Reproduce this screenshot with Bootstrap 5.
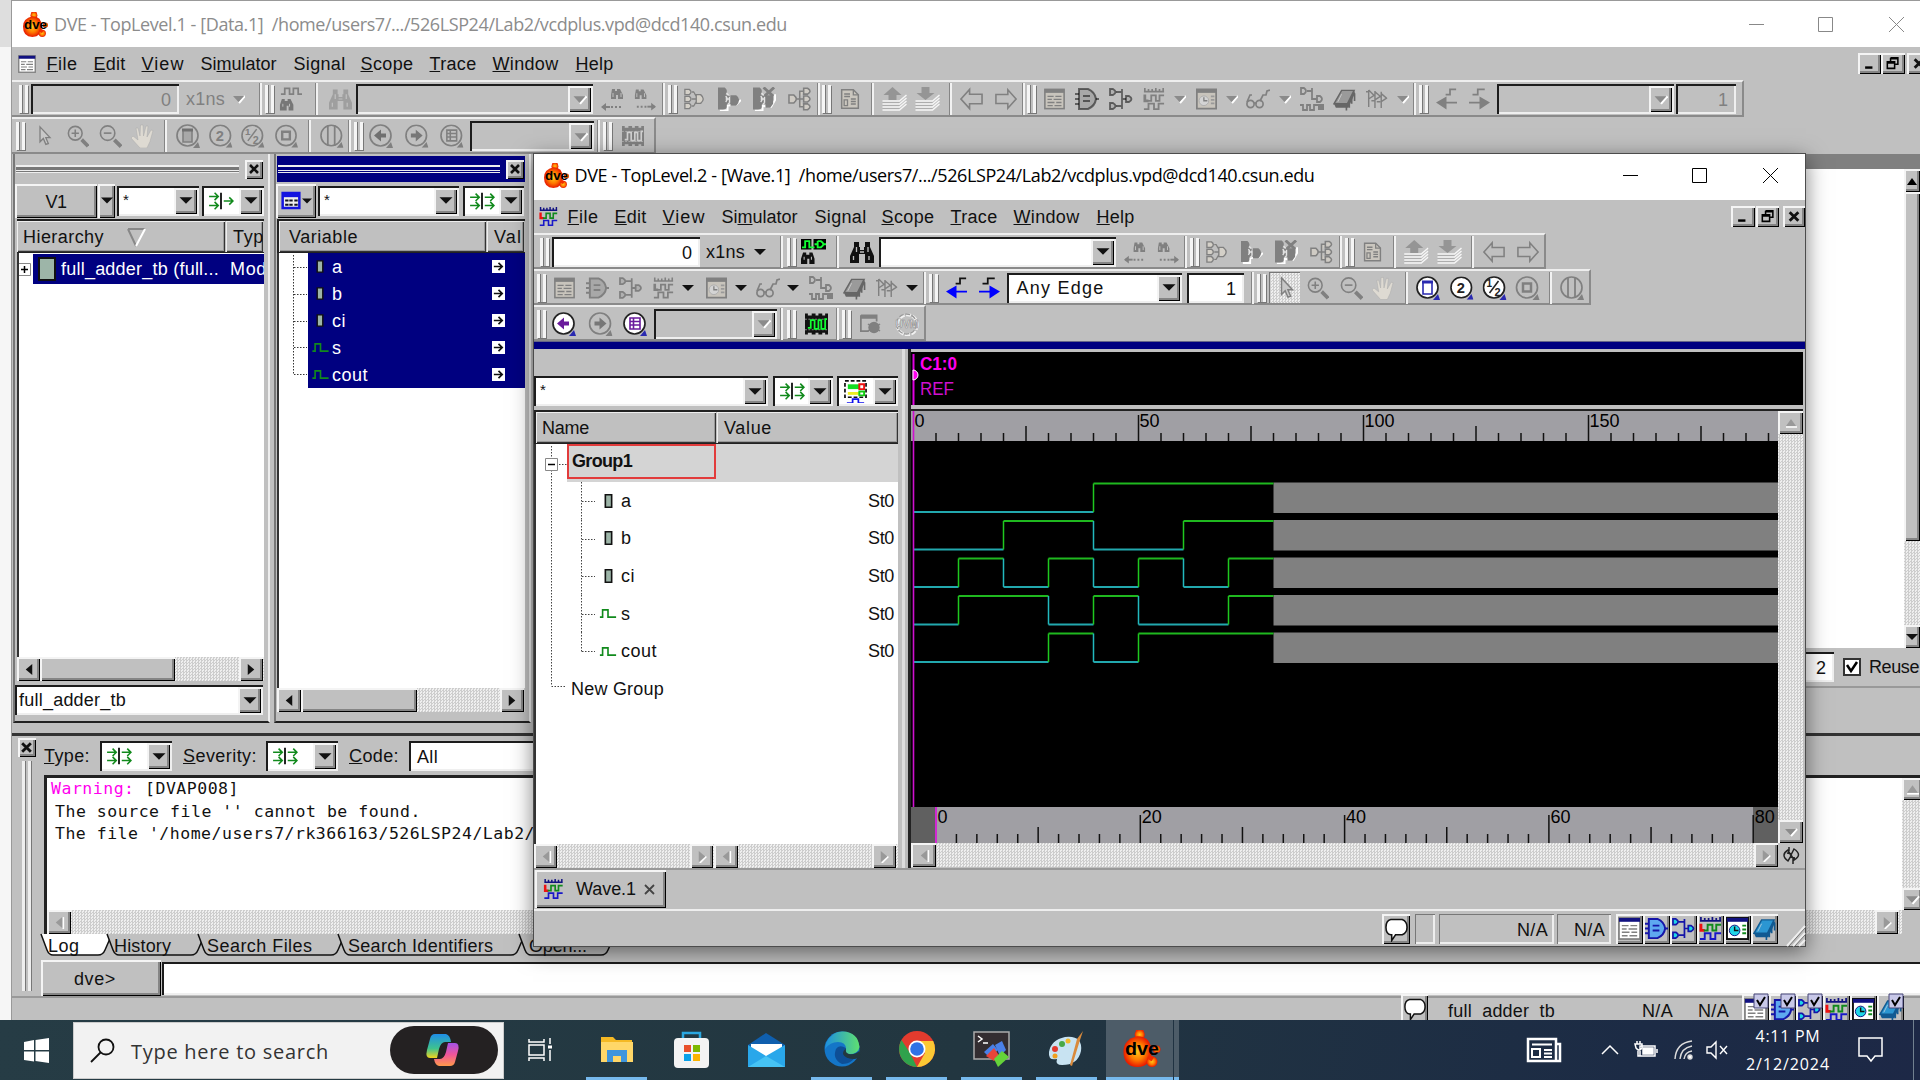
<!DOCTYPE html>
<html lang="en">
<head>
<meta charset="utf-8">
<title>DVE</title>
<link href="https://cdn.jsdelivr.net/npm/bootstrap@5.3.0/dist/css/bootstrap.min.css" rel="stylesheet">
<style>
body{width:1920px;height:1080px;overflow:hidden;background:#f3f3f3;font-family:"Liberation Sans",sans-serif;font-size:18px;line-height:20px;color:#111}
svg{display:block;overflow:visible}
.slot{flex:none;white-space:nowrap}
.fit{display:inline-block;white-space:pre}
.dis{color:#808080}
.face{background:#c0c0c0}
.raised{background:#c0c0c0;box-shadow:inset 2px 2px #f4f4f4,inset -1px -1px #000,inset -3px -3px #858585}
.sunk{box-shadow:inset 2px 2px #1c1c1c,inset -2px -2px #efefef}
.dither{background:repeating-conic-gradient(#cdcdcd 0 25%,#efefef 0 50%) 0 0/3px 3px}
.titlebar{height:46px;background:#fff;font-family:"Open Sans","Noto Sans",sans-serif;font-size:18px}
.menubar{height:33px;background:#c0c0c0}
.toolrow{height:36px;padding-top:1px;background:#c0c0c0;border-top:2px solid #eee;border-bottom:2px solid #8a8a8a;border-right:2px solid #8a8a8a;align-self:flex-start}
.toolrow.tall{height:37px}
.grab{height:28px;border-left:3px solid #f5f5f5;border-right:3px solid #f5f5f5;background:#c0c0c0;box-shadow:1px 1px #777,inset 1px 0 #777}
.divi{height:32px;border-left:1px solid #858585;border-right:2px solid #f2f2f2}
.boxy{height:30px;background:#fff;padding:2px}
.boxy.padded{padding:6px 8px 0 8px}
.greyed .boxy,.boxy.off{background:#c0c0c0}
.greyed{color:#808080}
.dd{width:23px;height:100%}
.star{font-size:15px;height:22px}
.mono{font-family:"DejaVu Sans Mono",monospace;font-size:16.5px;line-height:22.5px}
#desk{height:1020px;overflow:hidden}
#edge{width:12px;background:linear-gradient(#dedede 0 47px,#f6f6f6 47px);border-right:1px solid #999}
#main{width:1908px;background:#c0c0c0;border-top:1px solid #999}
#panes{height:579px}
#wave{left:533px;top:153px;width:1273px;height:794px;border:1px solid #4c4c4c;background:#c0c0c0;box-shadow:0 5px 20px rgba(0,0,0,.5)}
.pane{height:569px;padding-top:2px;border-right:2px solid #eee;border-left:2px solid #777;border-bottom:2px solid #222}
.phead{height:26px}
.frow{height:37px}
.cols{height:34px;border-top:2px solid #222;border-left:2px solid #222;border-bottom:1px solid #222}
.colhd{height:31px;padding-top:6px;box-shadow:inset 1px 1px #eee,inset -1px -1px #333,inset -2px -2px #999}
.listing{background:#fff;border-left:2px solid #333}
.navy{background:#000080}
.grip2{height:8px;border-top:2px solid #eee;border-bottom:3px double #eee;background:#777}
.grip2.active{background:#000080}
.sbar{height:24px}
#task{height:60px;background:linear-gradient(100deg,#263c45 0%,#223640 50%,#1c2b45 85%,#1d2846);color:#fff;font-family:"Open Sans",sans-serif}
#find{height:57px;background:#f2f2f2;border:1px solid #ccc;color:#333;font-size:20px}
.under{height:60px;border-bottom:3px solid #76b9ed}
.cell{height:30px;box-shadow:inset 1px 1px #777,inset -2px -2px #eee}
.cell.val{padding:6px 6px 0 0;text-align:right}
.btnsq{height:30px}
.p1{width:257px;margin-left:1px;padding-left:2px;padding-right:4px;padding-bottom:6px}
.p2{width:257px;margin-left:4px;padding-left:1px;padding-right:4px;padding-bottom:9px}
.selrow{height:30px;margin-top:1px;background:linear-gradient(90deg,#fff 14px,#000080 14px);color:#fff;width:245px;overflow:hidden}
.scoperow{height:34px}.varrow{height:27px;background:#000080;color:#fff}
.xbtn{width:18px;height:19px}
.srcview{border-left:3px solid #333;margin-left:2px}
.greybar{height:15px;background:#808080}
.srcbody{height:479px}.vtrack{width:16px}.vup{height:23px}.vthumb{height:349px}
#reuse{height:40px;border-bottom:2px solid #999}
#console{height:263px;border-top:3px solid #333}
.cside{width:29px;padding-top:2px}.vgrab{width:9px;height:230px;margin-top:4px;border-left:3px solid #eee;border-right:3px solid #eee;box-shadow:1px 0 #777,inset 1px 0 #777}
#cf{height:39px;padding-top:1px}
.logbox{height:159px;margin-left:3px;border-top:3px solid #222;border-left:3px solid #222}
.logtext{padding:0 4px;overflow:hidden}
.vtrack2{width:20px}.vb{height:22px}.vc{height:24px}
#tabs{height:26px}#cmd{height:36px}
.prompt{height:36px;padding:9px 0 0 33px}
#st1{height:24px;border-top:2px solid #999}
.nbar{height:8px;border-top:1px solid #668}
.wbody{height:519px}.wleft{width:368px;padding-right:4px}
#f3{height:57px;margin-bottom:4px}
.split{width:9px;border-left:3px solid #ddd;border-right:3px solid #222;background:#bbb}
.wright{padding-right:2px}
.grp{height:38px;background:#d4d4d4}.grpname{width:149px;height:35px;border:2px solid #e23b3b;background:#d4d4d4;padding:5px 0 0 3px}
.sgrow{height:37.6px}
.canv{border-top:2px solid #222;margin-top:3px}.vtrack3{width:25px}.vb3{height:23px}
#wt{height:43px;border-top:2px solid #999;border-bottom:2px solid #eee}.wtab{height:38px}
.navicon{--nv:#2a2ab0;--wh:#fff;--pu:#6a1a9c;color:#222}
.full{--nv:#111180;--wh:#fff;--rd:#e11;--gr:#118a1c;--bl:#1818c8;--cy:#1fd6e6;--gt:#5ea8f0;--ch:#2b96d2;--cd:#115a92}
.blueish{color:#1515a8}
.lit{--bx:#000;--gn:#1f3}
.edge-on{--k:#111;color:#00f}
.pressed{height:31px;box-shadow:inset 1px 1px #777}
.clock{font-size:16px;line-height:28px}
</style>
<script src="https://cdn.jsdelivr.net/npm/bootstrap@5.3.0/dist/js/bootstrap.bundle.min.js"></script>
</head>
<body>
<svg width="0" height="0" class="position-absolute">
<defs>
<radialGradient id="gr"><stop offset="0" stop-color="#ffc81a"/><stop offset=".55" stop-color="#ff7a00"/><stop offset="1" stop-color="#e81c00"/></radialGradient>
<linearGradient id="gedge" x1="0" y1="0" x2="1" y2="0"><stop offset="0" stop-color="#1d8fe0"/><stop offset="1" stop-color="#5fe070"/></linearGradient>
<linearGradient id="gcopA" x1="0" y1="0" x2="0" y2="1"><stop offset="0" stop-color="#1f8ee8"/><stop offset=".6" stop-color="#3ec28f"/><stop offset="1" stop-color="#f3d51c"/></linearGradient>
<linearGradient id="gcopB" x1="0" y1="0" x2="0" y2="1"><stop offset="0" stop-color="#a353e8"/><stop offset=".5" stop-color="#f0559a"/><stop offset="1" stop-color="#ff9a4a"/></linearGradient>
<symbol id="dve" viewBox="0 0 24 24"><path d="M8 0h5v5H8z" fill="#f22c00"/><circle cx="10.500" cy="3" r="3.300" fill="url(#gr)"/><path d="M9 4q9 0 9 10 0 10-9 10-9 0-9-10Q0 6 9 4z" fill="url(#gr)"/><circle cx="18.500" cy="20.500" r="3.500" fill="url(#gr)"/><circle cx="21.500" cy="12.500" r="2.500" fill="url(#gr)"/><path d="M16 17l3 2" stroke="#f22c00" stroke-width="3"/><text x="1" y="16" font-family="Liberation Sans" font-weight="bold" font-size="11.500" textLength="22" lengthAdjust="spacingAndGlyphs" fill="#000">dve</text></symbol>
<symbol id="bin" viewBox="0 0 24 24"><path d="M4 2h5v5h1v3h4V7h1V2h5v5l4 9v7h-9v-9h-6v9H0v-7l4-9z" fill="currentColor"/><path d="M6.500 7v5M18 7v5M3.500 16v4M19 16v4M10 12h4" stroke="var(--hi,#c0c0c0)" stroke-width="1.300"/></symbol>
<symbol id="findw" viewBox="0 0 24 24"><path d="M0 0h10v10H0zM12 0h12v10H12z" fill="var(--bx,none)"/><path d="M1 8h3V2h4v6h5M16 2v6h3q5-3 0-6h-3M13 5h3M21 5h3" fill="none" stroke="var(--gn,#808080)" stroke-width="1.800"/><path d="M2 13h3v2h3v-2h3l2 6v5H8v-5H6v5H0v-5z" fill="currentColor"/><path d="M3 17v3M10 17v3" stroke="#c0c0c0"/></symbol>
<symbol id="findg" viewBox="0 0 24 24"><path d="M2 7h4V1h5v6h4V1h5v6h4" fill="none" stroke="#808080" stroke-width="1.800"/><path d="M3 12h3v2h3v-2h3l3 6v6h-5v-5H8v5H1v-6z" fill="#777"/><path d="M4 17v3M11 17v3" stroke="#c0c0c0"/></symbol>
<symbol id="findL" viewBox="0 0 24 24"><path d="M11 2h3v2h2V2h3l3 6v4h-5V8h-2v4h-5V8z" fill="currentColor"/><path d="M12 6v4M20 6v4" stroke="#c0c0c0"/><path d="M1 20h8" stroke="currentColor" stroke-width="2"/><path d="M10 20h10" stroke="currentColor" stroke-width="2" stroke-dasharray="2 2"/><path d="M0 20l5-4v8z" fill="currentColor"/></symbol>
<symbol id="findR" viewBox="0 0 24 24"><path d="M3 2h3v2h2V2h3l3 6v4H9V8H7v4H2V8z" fill="currentColor"/><path d="M4 6v4M12 6v4" stroke="#c0c0c0"/><path d="M15 20h8" stroke="currentColor" stroke-width="2"/><path d="M4 20h10" stroke="currentColor" stroke-width="2" stroke-dasharray="2 2"/><path d="M24 20l-5-4v8z" fill="currentColor"/></symbol>
<symbol id="fan1" viewBox="0 0 24 24"><path d="M1 1h5q4 3 0 6H1zM1 9h5q4 3 0 6H1zM1 17h5q4 3 0 6H1zM14 7h5q6 5 0 10h-5zM9 4h2l3 5M9 12h5M9 20h2l3-5" fill="#d4d0c8" stroke="currentColor" stroke-width="1.500"/></symbol>
<symbol id="fan2" viewBox="0 0 24 24"><path d="M2 24h8v-5l5-1h4l5-5" fill="none" stroke="#fff" stroke-width="2"/><path d="M0 0h7q4 3 1 7l5 3V8h6q6 4 0 11h-6v-2l-4 1q1 5-4 5H0z" fill="currentColor"/><path d="M9 6l2 2M8 9q3 3 0 6M8 12h4M10 18l2-2M12 10v6" stroke="#e4e4e4" stroke-width="1.500" fill="none"/></symbol>
<symbol id="fan3" viewBox="0 0 24 24"><path d="M2 24h8v-5l5 1h4l4-7V7" fill="none" stroke="#fff" stroke-width="2"/><path d="M0 0h7q4 3 1 7l5 3V8h8v9l-3 4h-5v-4l-4 1q1 5-4 5H0z" fill="currentColor"/><path d="M11 0l10 9M22 0L12 9" stroke="currentColor" stroke-width="3"/><path d="M9 6l2 2M8 9q3 3 0 6M8 12h4M10 18l2-2M12 10v6" stroke="#e4e4e4" stroke-width="1.500" fill="none"/></symbol>
<symbol id="fan4" viewBox="0 0 24 24"><path d="M1 8h5q5 4 0 8H1zM16 1h4q5 3 0 6h-4zM16 9h4q5 3 0 6h-4zM16 17h4q5 3 0 6h-4zM9 12h7M12 12V4h4M12 12v8h4" fill="#cfcbc4" stroke="currentColor" stroke-width="1.600"/></symbol>
<symbol id="docu" viewBox="0 0 24 24"><path d="M2 1h14l6 6v16H2z" fill="#cac6be" stroke="currentColor" stroke-width="1.800"/><path d="M16 1v6h6M5 6h7M5 9h7M13 12h6M13 15h6M13 18h6M5 13h4v7H5z" fill="none" stroke="currentColor" stroke-width="1.600"/></symbol>
<symbol id="stk1" viewBox="0 0 24 24"><path d="M0 14h17l7-6M0 17h17l7-6M0 20h17l7-6M0 23h17l7-6" fill="none" stroke="#f6f6f6" stroke-width="1.500"/><path d="M0 15.500h17M0 18.500h17M0 21.500h17" stroke="#a8a8a8" stroke-width=".8"/><path d="M10 0l9 8h-5v5H6V8H1z" fill="#959595"/></symbol>
<symbol id="stk2" viewBox="0 0 24 24"><path d="M0 14h17l7-6M0 17h17l7-6M0 20h17l7-6M0 23h17l7-6" fill="none" stroke="#f6f6f6" stroke-width="1.500"/><path d="M0 15.500h17M0 18.500h17M0 21.500h17" stroke="#a8a8a8" stroke-width=".8"/><path d="M10 13L1 6h5V0h8v6h5z" fill="#959595"/></symbol>
<symbol id="aL" viewBox="0 0 24 24"><path d="M1 12L10 2v5h13v10H10v5z" fill="none" stroke="currentColor" stroke-width="1.700"/></symbol>
<symbol id="aR" viewBox="0 0 24 24"><path d="M23 12L14 2v5H1v10h13v5z" fill="none" stroke="currentColor" stroke-width="1.700"/></symbol>
<symbol id="lst" viewBox="0 0 24 24"><rect x="1" y="1" width="22" height="22" fill="var(--wh,#c8c4bc)" stroke="var(--ed,#808080)" stroke-width="1.800"/><path d="M1 3h22" stroke="var(--nv,#808080)" stroke-width="4"/><path d="M4 9h7M13 9h7M4 12.500h5M11 12.500h9M4 16h8M14 16h6M4 19.500h6M12 19.500h8" stroke="var(--ln,#808080)" stroke-width="1.500"/></symbol>
<symbol id="gate" viewBox="0 0 24 24"><path d="M0 7h4M0 12h4M0 17h4M19 12h5" stroke="currentColor" stroke-width="2"/><path d="M4 2h9q7 3 8 10-1 7-8 10H4z" fill="var(--gt,#a8a8a8)" stroke="currentColor" stroke-width="2"/><path d="M8 9h7M8 14h7" stroke="currentColor" stroke-width="2"/></symbol>
<symbol id="pth" viewBox="0 0 24 24"><path d="M7 5h6M7 19h6M13 2v20M13 12h4" fill="none" stroke="currentColor" stroke-width="1.800"/><path d="M1 2h3q5 3 0 6H1zM1 16h3q5 3 0 6H1zM17 9h3q5 3 0 6h-3z" fill="var(--cy,#b0b0b0)" stroke="currentColor" stroke-width="1.800"/></symbol>
<symbol id="wv" viewBox="0 0 24 24"><path d="M1 4h22M2 0v4M6 1v3M10 1v3M14 0v4M18 1v3M22 0v4" stroke="var(--nv,#808080)" stroke-width="1.800" fill="none"/><path d="M2 7v7h4" stroke="var(--rd,#808080)" stroke-width="3" fill="none"/><path d="M5 14h4V8h5v6h4V8h5" stroke="var(--gr,#808080)" stroke-width="2" fill="none"/><path d="M1 23h5v-6h6v6h5v-6h6" stroke="var(--bl,#808080)" stroke-width="2" fill="none"/></symbol>
<symbol id="clk" viewBox="0 0 24 24"><rect x="1" y="1" width="22" height="22" fill="var(--wh,#c8c4bc)" stroke="currentColor" stroke-width="2"/><path d="M1 3h22" stroke="var(--nv,#808080)" stroke-width="4"/><circle cx="9" cy="14" r="5.500" fill="var(--cy,#d4d4d4)" stroke="var(--nv,#aaa)"/><path d="M9 10v4h4" stroke="currentColor" fill="none" stroke-width="1.500"/><path d="M17 9h4M17 13h4M17 17h4" stroke="var(--gr,#999)" stroke-width="2"/></symbol>
<symbol id="gls" viewBox="0 0 24 24"><path d="M1 15l3-7h2M14 14l3-6h3l1-4 3-1M8 16h3" stroke="currentColor" fill="none" stroke-width="1.700"/><circle cx="4.500" cy="17" r="3.600" fill="none" stroke="currentColor" stroke-width="1.700"/><circle cx="13.500" cy="17" r="3.600" fill="none" stroke="currentColor" stroke-width="1.700"/></symbol>
<symbol id="pwv" viewBox="0 0 24 24"><path d="M1 1h3q4 3 0 6H1zM17 9h3q4 3 0 6h-3zM7 4h5v8h5M12 1v11" fill="none" stroke="currentColor" stroke-width="1.800"/><path d="M0 18h3v5h4v-5h3v5h4v-5h4" fill="none" stroke="currentColor" stroke-width="1.800"/><rect x="18" y="17" width="6" height="6" fill="currentColor"/></symbol>
<symbol id="chip" viewBox="0 0 24 24"><path d="M9 3h13l-7 14H1z" fill="var(--ch,#9a9a9a)" stroke="var(--cd,#666)" stroke-width="1.500"/><path d="M15 17l7-14 1 3-7 15H3l-2-4z" fill="var(--cd,#666)"/><path d="M14 24v-5M17 21v-6M19.500 17v-6M22.500 14V6" stroke="var(--cd,#666)" stroke-width="1.700"/><path d="M9 7l-4 8" stroke="#ddd" stroke-width="1" opacity=".7"/></symbol>
<symbol id="flg" viewBox="0 0 24 24"><path d="M3 2v19M10 3v19M17 4v18M3 2l6 6-6 4M10 4l6 5-6 4M17 6l6 5-6 4M0 4h3M6 14h4M12 15h4" stroke="currentColor" fill="none" stroke-width="1.600"/></symbol>
<symbol id="edL" viewBox="0 0 24 24"><path d="M11 7h5V1h7" stroke="var(--k,#808080)" stroke-width="2" fill="none"/><path d="M0 16l12-7v6h12v2H12v7z" fill="currentColor"/></symbol>
<symbol id="edR" viewBox="0 0 24 24"><path d="M4 7h6V1h8" stroke="var(--k,#808080)" stroke-width="2" fill="none"/><path d="M24 16L12 9v6H0v2h12v7z" fill="currentColor"/></symbol>
<symbol id="cur" viewBox="0 0 24 24"><path d="M6 1v18l4-4 3 7 3-1-3-7h5z" fill="#c8c8c8" stroke="currentColor" stroke-width="1.600"/></symbol>
<symbol id="zin" viewBox="0 0 24 24"><circle cx="9" cy="9" r="7.500" fill="none" stroke="currentColor" stroke-width="1.700"/><path d="M5 9h8M9 5v8" stroke="currentColor" stroke-width="1.700"/><path d="M16 16l7 7" stroke="currentColor" stroke-width="4"/></symbol>
<symbol id="zout" viewBox="0 0 24 24"><circle cx="9" cy="9" r="7.500" fill="none" stroke="currentColor" stroke-width="1.700"/><path d="M5 9h8" stroke="currentColor" stroke-width="1.700"/><path d="M16 16l7 7" stroke="currentColor" stroke-width="4"/></symbol>
<symbol id="hnd" viewBox="0 0 24 24"><path d="M9 24L0 14l2-2 5 4-2-12h2l2 8 .5-11h2.500l.5 11L15 2h2l-1 11 4-7 2 .5-3 11-3 6.500z" fill="#dedad2" stroke="#aaa" stroke-width=".5"/></symbol>
<symbol id="rnd" viewBox="0 0 24 24"><circle cx="11.500" cy="11.500" r="10.500" fill="var(--wh,none)" stroke="currentColor" stroke-width="1.700"/><path d="M24 24h-7l5-6z" fill="var(--nv,#808080)"/></symbol>
<symbol id="zfit" viewBox="0 0 24 24"><use href="#rnd"/><path d="M7 6h9v12H7z" fill="var(--wh,#a8a8a8)" stroke="var(--nv,#808080)" stroke-width="1.600"/><path d="M6 6h11" stroke="var(--nv,#707070)" stroke-width="3"/></symbol>
<symbol id="z2" viewBox="0 0 24 24"><use href="#rnd"/><text x="7" y="17" font-size="15" font-weight="bold" fill="currentColor" font-family="Liberation Sans">2</text></symbol>
<symbol id="zh" viewBox="0 0 24 24"><use href="#rnd"/><path d="M7 17L16 5" stroke="currentColor" stroke-width="1.500"/><text x="4" y="11" font-size="10" font-weight="bold" fill="currentColor" font-family="Liberation Sans">1</text><text x="12" y="20" font-size="11" font-weight="bold" fill="currentColor" font-family="Liberation Sans">2</text></symbol>
<symbol id="zbx" viewBox="0 0 24 24"><circle cx="11.500" cy="11.500" r="10.500" fill="none" stroke="currentColor" stroke-width="1.700"/><path d="M24 24h-7l5-6z" fill="currentColor"/><path d="M7.500 7.500h8v8h-8z" fill="none" stroke="currentColor" stroke-width="2.500"/></symbol>
<symbol id="zcl" viewBox="0 0 24 24"><circle cx="11.500" cy="11.500" r="10.500" fill="none" stroke="currentColor" stroke-width="1.700"/><path d="M24 24h-7l5-6z" fill="currentColor"/><path d="M8 1v21M15 1v21" stroke="currentColor" stroke-width="1.800"/></symbol>
<symbol id="nvL" viewBox="0 0 24 24"><use href="#rnd"/><path d="M5 11.500l7-6v4h5v4h-5v4z" fill="var(--pu,#707070)"/></symbol>
<symbol id="nvR" viewBox="0 0 24 24"><use href="#rnd"/><path d="M18 11.500l-7-6v4H6v4h5v4z" fill="#777"/></symbol>
<symbol id="nvl" viewBox="0 0 24 24"><use href="#rnd"/><path d="M7 6h10v11H7zM10.500 6v11M7 9.500h10M7 13h10" fill="none" stroke="var(--pu,#808080)" stroke-width="1.600"/></symbol>
<symbol id="mem" viewBox="0 0 24 24"><path d="M0 1h3v2h4V1h4v2h3V1h4v2h3V1h3v22h-3v-2h-3v2h-4v-2h-3v2H7v-2H3v2H0z" fill="currentColor"/><path d="M0 7h24M0 18h24" stroke="#c0c0c0" stroke-width="1" opacity=".7" stroke-dasharray="2 1.500"/><path d="M3 16h3V8h4v9h4V8h3v9h4V7h2" fill="none" stroke="var(--gn,#d0d0d0)" stroke-width="1.800"/></symbol>
<symbol id="wbg" viewBox="0 0 24 24"><path d="M1 2h18v7M1 2v18h9" fill="none" stroke="currentColor" stroke-width="2"/><path d="M1 4h18" stroke="currentColor" stroke-width="4"/><circle cx="16" cy="16" r="6.500" fill="currentColor"/><path d="M9 12l14 8M23 12L9 20" stroke="currentColor" stroke-width="1.500"/></symbol>
<symbol id="uvm" viewBox="0 0 24 24"><circle cx="12.800" cy="12.800" r="10" fill="none" stroke="#f2f2f2" stroke-width="3" stroke-dasharray="5 1.500"/><circle cx="12" cy="12" r="10" fill="none" stroke="#999" stroke-width="1.300" stroke-dasharray="5 1.500"/><text x="1" y="16" font-size="11" textLength="23" lengthAdjust="spacingAndGlyphs" font-weight="bold" fill="#f2f2f2" stroke="#909090" stroke-width=".7" font-family="Liberation Sans">UVM</text></symbol>
<symbol id="bub" viewBox="0 0 24 24"><path d="M6 1h12q5 2 5 8t-5 8h-7l-4 6v-6H6Q1 16 1 9t5-8z" fill="#fff" stroke="#111" stroke-width="1.600"/></symbol>
<symbol id="fl2" viewBox="0 0 26 24"><path d="M13 3v18" stroke="#111" stroke-width="2"/><path d="M0 8h9M6 4l4 4-4 4M0 17h9M6 13l4 4-4 4M16 8h9M22 4l4 4-4 4M16 17h9M22 13l4 4-4 4" fill="none" stroke="#118a1c" stroke-width="1.700"/></symbol>
<symbol id="fl1" viewBox="0 0 26 24"><path d="M13 3v18" stroke="#111" stroke-width="2"/><path d="M0 7h9M6 3l4 4-4 4M0 17h9M6 13l4 4-4 4M16 12h9M22 8l4 4-4 4" fill="none" stroke="#118a1c" stroke-width="1.700"/></symbol>
<symbol id="tbl" viewBox="0 0 24 22"><path d="M2 2h20v18H2z" fill="#eee" stroke="#1414e0" stroke-width="3"/><path d="M2 5h20" stroke="#1414e0" stroke-width="4"/><path d="M5 11h4M10 11h4M16 11h4M5 16h4M10 16h4M16 16h4" stroke="#112" stroke-width="2.500"/></symbol>
<symbol id="sig" viewBox="0 0 24 24"><path d="M1 1h22v17H1z" fill="#fff" stroke="#111" stroke-width="1.800" stroke-dasharray="4 2"/><path d="M4 7h14" stroke="#1d2" stroke-width="5"/><path d="M4 14h14" stroke="#ee2" stroke-width="3"/><path d="M16 4.500h5v5h-5z" fill="#fff" stroke="#e11" stroke-width="2"/><path d="M16 12h5v4h-5z" fill="#fff" stroke="#1c1" stroke-width="2"/><path d="M3 24h6v-4h6v4h6" fill="none" stroke="#11e" stroke-width="1.800"/></symbol>
<symbol id="v" viewBox="0 0 12 12"><path d="M0 3h12l-6 6z" fill="#111"/></symbol>
<symbol id="vg" viewBox="0 0 12 12"><path d="M6 10l6-7" stroke="#fff" stroke-width="2"/><path d="M0 3h11l-5.500 6z" fill="#8b8b8b"/></symbol>
<symbol id="port" viewBox="0 0 10 16"><path d="M1.500 1h7v14h-7z" fill="#9db5a8" stroke="#111" stroke-width="1.800"/></symbol>
<symbol id="pls" viewBox="0 0 18 10"><path d="M0 9h3V1h6v8h9" fill="none" stroke="#118a1c" stroke-width="1.800"/></symbol>
<symbol id="goto" viewBox="0 0 14 14"><path d="M0 0h14v14H0z" fill="#fff"/><path d="M2 7h8M7 3l4 4-4 4" stroke="#111" stroke-width="1.800" fill="none"/></symbol>
<symbol id="link" viewBox="0 0 20 20"><path d="M7 5q-8 5 0 11l3-5zM13 4q9 6 0 11l-3-5zM6 8l5 1M9 12l5 1M8 2v4M12 14v5" fill="none" stroke="#222" stroke-width="1.500"/></symbol>
<symbol id="k" viewBox="0 0 12 12"><path d="M2 2l8 8M10 2l-8 8" stroke="#111" stroke-width="2.600"/></symbol>
<symbol id="tl" viewBox="0 0 12 12"><path d="M9 1v10L3 6z" fill="#111"/></symbol><symbol id="tr" viewBox="0 0 12 12"><path d="M3 1v10l6-5z" fill="#111"/></symbol>
<symbol id="tlg" viewBox="0 0 12 12"><path d="M10 1v11" stroke="#fff" stroke-width="1.500"/><path d="M9 1v10L3 6z" fill="#999"/></symbol><symbol id="trg" viewBox="0 0 12 12"><path d="M4 12l6-6" stroke="#fff" stroke-width="1.500"/><path d="M3 1v10l6-5z" fill="#999"/></symbol>
<symbol id="tug" viewBox="0 0 12 12"><path d="M1 10h11" stroke="#fff" stroke-width="1.500"/><path d="M1 9h10L6 2z" fill="#999"/></symbol>
<symbol id="mn" viewBox="0 0 16 16"><path d="M2 13h9" stroke="#000" stroke-width="3"/></symbol>
<symbol id="rs" viewBox="0 0 16 16"><path d="M5 1h9v8h-3M5 1v4M1 6h9v8H1zM5 2h9M1 7.500h9" fill="none" stroke="#000" stroke-width="1.900"/></symbol>
</defs></svg>

<div id="desk" class="d-flex position-relative">
  <div id="edge" class="flex-shrink-0"></div>
  <main id="main" class="d-flex flex-column flex-shrink-0">
    <div id="t1" class="titlebar d-flex align-items-center" style="color:#8c8c8c"></div>
    <div id="m1" class="menubar d-flex align-items-center"></div>
    <div id="r11" class="toolrow tall greyed d-flex align-items-center"></div>
    <div id="r12" class="toolrow tall greyed d-flex align-items-center"></div>
    <div id="panes" class="d-flex">
      <section class="pane p1 d-flex flex-column flex-shrink-0">
        <div id="h1" class="phead d-flex align-items-center"></div>
        <div id="f1" class="frow d-flex align-items-center"></div>
        <div id="c1" class="cols d-flex"></div>
        <div class="listing flex-grow-1"><div id="li1" class="d-flex align-items-center selrow"></div></div>
        <div id="s1" class="sbar dither d-flex"></div>
        <div id="b1" class="d-flex align-items-end scoperow"></div>
      </section>
      <section class="pane p2 d-flex flex-column flex-shrink-0">
        <div id="h2" class="phead navy d-flex align-items-center"></div>
        <div id="f2" class="frow d-flex align-items-center"></div>
        <div id="c2" class="cols d-flex"></div>
        <div class="listing flex-grow-1 d-flex"><svg id="tree2" width="29" height="136"></svg><div id="vars" class="flex-grow-1"></div></div>
        <div id="s2" class="sbar dither d-flex"></div>
      </section>
      <section class="flex-grow-1 d-flex flex-column srcview">
        <div class="greybar"></div>
        <div class="srcbody d-flex justify-content-end bg-white"><div class="vtrack dither d-flex flex-column"><div class="raised vup d-flex align-items-center justify-content-center"><svg width="10" height="10"><path d="M0 9h10L5 2z"/></svg></div><div class="raised vthumb"></div><div class="flex-grow-1"></div><div class="raised vup d-flex align-items-center justify-content-center"><svg width="14" height="12"><use href="#v"/></svg></div></div></div>
        <div id="reuse" class="d-flex align-items-center"></div>
      </section>
    </div>
    <div id="console" class="d-flex">
      <div class="cside d-flex flex-column align-items-center flex-shrink-0"><div class="raised xbtn d-flex align-items-center justify-content-center"><svg width="13" height="13"><use href="#k"/></svg></div><div class="vgrab"></div></div>
      <div class="flex-grow-1 d-flex flex-column">
        <div id="cf" class="d-flex align-items-center"></div>
        <div class="logbox bg-white d-flex">
          <div class="flex-grow-1 d-flex flex-column"><div class="mono flex-grow-1 logtext"><div><span class="fit" data-w="188"><span style="color:#f0e">Warning:</span> [DVAP008]</span></div><div><span class="fit ms-1" data-w="366">The source file '' cannot be found.</span></div><div><span class="fit ms-1" data-w="480">The file '/home/users7/rk366163/526LSP24/Lab2/</span></div></div><div id="s3" class="sbar dither d-flex"></div></div>
          <div class="vtrack2 dither d-flex flex-column"><div class="raised vb d-flex align-items-center justify-content-center"><svg width="15" height="13"><use href="#tug"/></svg></div><div class="flex-grow-1"></div><div class="raised vb d-flex align-items-center justify-content-center"><svg width="15" height="13"><use href="#vg"/></svg></div><div class="face vc"></div></div>
        </div>
        <div id="tabs"></div>
        <div id="cmd" class="d-flex align-items-center"></div>
      </div>
    </div>
    <div id="st1" class="d-flex align-items-center"></div>
  </main>

  <main id="wave" class="position-absolute d-flex flex-column">
    <div id="t2" class="titlebar d-flex align-items-center text-black pb-1"></div>
    <div id="m2" class="menubar d-flex align-items-center"></div>
    <div id="r21" class="toolrow d-flex align-items-center"></div>
    <div id="r22" class="toolrow d-flex align-items-center"></div>
    <div id="r23" class="toolrow d-flex align-items-center"></div>
    <div class="navy nbar"></div>
    <div class="d-flex wbody">
      <section class="wleft d-flex flex-column flex-shrink-0">
        <div id="f3" class="d-flex align-items-end"></div>
        <div id="c3" class="cols d-flex"></div>
        <div class="listing flex-grow-1 d-flex"><svg id="tree3" width="31" height="260"></svg><div id="sigs" class="flex-grow-1"></div></div>
        <div id="s4" class="sbar dither d-flex"></div>
      </section>
      <div class="split"></div>
      <section class="wright flex-grow-1 d-flex flex-column">
        <svg id="cursorbar" width="892" height="57"></svg>
        <div class="d-flex canv"><svg id="canvas" width="867" height="432"></svg><div class="vtrack3 dither d-flex flex-column"><div class="raised vb3 d-flex align-items-center justify-content-center"><svg width="14" height="12"><use href="#tug"/></svg></div><div class="flex-grow-1"></div><div class="raised vb3 d-flex align-items-center justify-content-center"><svg width="14" height="12"><use href="#vg"/></svg></div></div></div>
        <div id="s5" class="sbar dither d-flex"></div>
      </section>
    </div>
    <div id="wt" class="d-flex"></div>
    <div id="st2" class="d-flex align-items-center flex-grow-1"></div>
  </main>
</div>
<footer id="task" class="d-flex align-items-center"></footer>

<script>
const $=id=>document.getElementById(id);
const I=(n,w=24,h=24,c='')=>`<svg class="${c}" width="${w}" height="${h}"><use href="#${n}" width="${w}" height="${h}"/></svg>`;
const T=(s,w,c='')=>`<span class="fit ${c}" data-w="${w}">${s}</span>`;
const H='<div class="grab"></div>',S='<div class="divi"></div>',STAR='<div class="star">*</div>';
// Lays items out along a bar: each item is [left, width, html, classes]; gaps become margins.
function bar(id,x0,items,end){let x=x0,o='';
  for(const [l,w,h,c] of items){o+=`<div class="slot ${c||''}" style="margin-left:${(l-x).toFixed(1)}px;width:${w}px">${h}</div>`;x=l+w}
  const e=$(id);e.innerHTML=o;if(end)e.style.width=(end-x0)+'px'}
const combo=(txt,off)=>`<div class="boxy sunk d-flex align-items-center ${off?'off':''}"><div class="flex-grow-1 ps-1">${txt}</div><div class="dd raised d-flex align-items-center justify-content-center">${I(off?'vg':'v',14,13)}</div></div>`;
const field=(txt,off)=>`<div class="boxy padded sunk text-end ${off?'off':''}">${txt}</div>`;
const ic=(n,l,r,c)=>[l,r-l,I(n,r-l,24,c)];
const h=(l)=>[l,9,H], s=l=>[l,3,S], v=(l,g)=>[l,12,I(g?'vg':'v',12,12)];
const sq=(n,hh=24,w=14)=>`<div class="raised d-flex align-items-center justify-content-center" style="height:${hh}px">${I(n,w,w-1)}</div>`;
const XB='<div class="xbtn raised d-flex align-items-center justify-content-center">'+I('k',12,12)+'</div>';

const ctl=(c)=>['M0 7.5h15','M.5.5h14v14H.5z','M0 0l15 15M15 0L0 15'].map(d=>`<svg width="15" height="15" stroke="${c}" fill="none"><path d="${d}"/></svg>`);
let k=ctl('#888');
bar('t1',12,[[23,25,I('dve',25,25)],[54,733,T('DVE - TopLevel.1 - [Data.1]  /home/users7/.../526LSP24/Lab2/vcdplus.vpd@dcd140.csun.edu',733)],[1749,15,k[0]],[1818,15,k[1]],[1889,15,k[2]]]);
k=ctl('#000');
bar('t2',534,[[544,25,I('dve',25,25)],[574.5,740,T('DVE - TopLevel.2 - [Wave.1]  /home/users7/.../526LSP24/Lab2/vcdplus.vpd@dcd140.csun.edu',740)],[1623,15,k[0]],[1692,15,k[1]],[1763,15,k[2]]]);
const menu=[['<u>F</u>ile',46,31],['<u>E</u>dit',93,32],['<u>V</u>iew',141,43],['Si<u>m</u>ulator',200,76],['Si<u>g</u>nal',293,52],['<u>S</u>cope',360,53],['<u>T</u>race',429,47],['<u>W</u>indow',492,66],['<u>H</u>elp',575,38]];
bar('m1',12,[[18,18,I('lst',18,18,'full')],...menu.map(m=>[m[1]+.5,m[2],T(m[0],m[2])]),[1858,23,sq('mn',21)],[1881,24,sq('rs',21)],[1907,23,sq('k',21)]]);
bar('m2',534,[[539,19,I('wv',19,19,'full')],...menu.map(m=>[m[1]+521.5,m[2],T(m[0],m[2])]),[1731,24,sq('mn',21)],[1756,23,sq('rs',21)],[1783,22,sq('k',21)]]);

bar('r11',12,[h(19),[31,148,field('0')],[186,39,T('x1ns',39)],v(233,1),s(259),h(264.5),ic('findg',279,302),s(315),[328.5,23,I('bin',23,24,'opacity-50')],[356,237,combo('',1)],
 ic('findL',601,625),ic('findR',633,656),s(662),h(668),ic('fan1',684,705),ic('fan2',718,741),ic('fan3',753,776),ic('fan4',787.5,811),s(817),h(822),ic('docu',840,860),s(871),ic('stk1',882,907),ic('stk2',915,940),s(949),ic('aL',960,983),ic('aR',995,1017),s(1022),h(1027),ic('lst',1044,1065),ic('gate',1075,1099,'text-black-50'),ic('pth',1109,1133,'text-black-50'),ic('wv',1143,1165),v(1174,1),ic('clk',1196,1217),v(1226,1),ic('gls',1246,1270),v(1279,1),ic('pwv',1300,1324),ic('chip',1333,1356),ic('flg',1366,1387.5),v(1397,1),s(1413),h(1419),ic('edL',1436,1457),ic('edR',1469,1490),[1496.5,177.5,combo('',1)],[1676,60,field('1')]],1744);
bar('r12',12,[h(16),ic('cur',35,55),ic('zin',66.5,88.5),ic('zout',99,122),ic('hnd',131,155),s(164),ic('zfit',176,200),ic('z2',208.5,232),ic('zh',241,264.5),ic('zbx',275,298),s(308),ic('zcl',319.5,343),s(348),h(354),ic('nvL',369,393),ic('nvR',405,428.5),ic('nvl',439.5,463),[470,124,combo('',1)],s(597),h(603),ic('mem',622,644)],656);

bar('r21',534,[h(540),[552,148,field('0')],[706,39,T('x1ns',39)],v(754),s(780),h(787),[801,25,'<div class="lit">'+I('findw',25,25)+'</div>'],s(836),ic('bin',850,874),[879,237,combo('')],
 ...[['findL',1124,1147],['findR',1156,1179]].map(a=>ic(...a,'dis')),s(1184),h(1190),...[['fan1',1206,1228],['fan2',1241,1263],['fan3',1275,1298],['fan4',1310,1333]].map(a=>ic(...a,'dis')),s(1339),h(1345),ic('docu',1363,1382,'dis'),s(1393),ic('stk1',1404,1428.5,'dis'),ic('stk2',1437,1462,'dis'),s(1471),ic('aL',1483,1505,'dis'),ic('aR',1517,1539,'dis')],1546);
bar('r22',534,[h(537),ic('lst',554,575,'dis'),ic('gate',586,609,'dis'),ic('pth',618.5,642,'dis'),ic('wv',653,674,'dis'),v(682),ic('clk',706,727,'dis'),v(735),ic('gls',756,780,'dis'),v(787),ic('pwv',809,833,'dis'),ic('chip',843,866,'dis'),ic('flg',876,897.5,'dis'),v(906),s(923),h(929),[946,21,'<div class="edge-on">'+I('edL',21,22)+'</div>'],[979,21,'<div class="edge-on">'+I('edR',21,22)+'</div>'],[1006.5,175.5,combo('<div class="ps-1">'+T('Any Edge',88)+'</div>')],[1187,57,field('1')],s(1251),h(1257),[1269,31,'<div class="pressed dither d-flex justify-content-center align-items-center ps-1">'+I('cur',22,24,'dis')+'</div>'],ic('zin',1307,1329,'dis'),ic('zout',1340,1363,'dis'),ic('hnd',1372,1395,'dis'),s(1405),ic('zfit',1416,1440,'navicon'),ic('z2',1449.5,1473,'navicon'),ic('zh',1482,1507,'navicon'),ic('zbx',1515,1540,'dis'),s(1549),ic('zcl',1560,1584,'dis')],1591);
bar('r23',534,[h(537),ic('nvL',552,576,'navicon'),ic('nvR',588,613,'dis'),ic('nvl',623,647,'navicon'),[654,123,combo('',1)],s(780),h(787),[805,23,'<div class="lit">'+I('mem',23,24)+'</div>'],s(836),h(842),ic('wbg',860,881,'dis'),ic('uvm',894,919)],926);

// data pane headers
bar('h1',17,[[16,223,'<div class="grip2"></div>'],[245,18,XB]]);
bar('h2',277,[[278,222,'<div class="grip2 active"></div>'],[506,18,XB]]);
bar('f1',17,[[15,82,'<div class="raised text-center pt-2" style="height:34px">'+T('V1',21)+'</div>'],[98,17,'<div class="raised d-flex align-items-center justify-content-center" style="height:34px">'+I('v',12,13)+'</div>'],[117,82,combo(STAR)],[202,62,combo(I('fl1',26,22))]]);
bar('f2',277,[[276,40,'<div class="raised d-flex align-items-center justify-content-around px-1" style="height:34px">'+I('tbl',20,19)+I('v',10,12)+'</div>'],[318,141,combo(STAR)],[463,61,combo(I('fl2',26,22))]]);
const ch=(t,p)=>`<div class="colhd face overflow-hidden" style="padding-left:${p}px">${t}</div>`;
bar('c1',19,[[17,208,ch('<div class="d-flex align-items-center">'+T('Hierarchy',81)+'<svg class="ms-4" width="17" height="19"><path d="M0 1h17M0 1l8 17" stroke="#888" stroke-width="2"/><path d="M17 1L8 18" stroke="#fff" stroke-width="2"/></svg></div>',6)],[226,37,ch(T('Typ',31),7)]]);
bar('c2',279,[[279,207,ch(T('Variable',69),10)],[487,37,ch(T('Val',28),7)]]);
bar('li1',19,[[18,13,'<svg width="13" height="13"><path d="M.5.5h12v12H.5z" fill="#fff" stroke="#888"/><path d="M3 6.500h7M6.500 3v7" stroke="#000" stroke-width="1.500"/></svg>'],[37,20,'<svg width="20" height="24"><path d="M2 1h16v22H2z" fill="#9db5a8" stroke="#111" stroke-width="2"/></svg>'],[61,158,T('full_adder_tb (full...',158)],[230,34,T('Mod',37)]]);
bar('s1',17,[[17,23,sq('tl')],[40,135,'<div class="raised" style="height:24px"></div>'],[239,24,sq('tr')]]);
bar('s2',277,[[277,24,sq('tl')],[301,116,'<div class="raised" style="height:24px"></div>'],[500,24,sq('tr')]]);
bar('b1',17,[[15,248,combo('<div style="margin-left:-2px">'+T('full_adder_tb',107)+'</div>')]]);
$('tree2').innerHTML='<path d="M14.500 2v120M15 14.500h13M15 41.500h13M15 68.500h13M15 94.500h13M15 121.500h13" stroke="#333" stroke-dasharray="1.500 1.500"/>';
$('vars').innerHTML=[['a',9,'port'],['b',9,'port'],['ci',14,'port'],['s',8,'pls'],['cout',36,'pls']].map(([n,w,g])=>`<div class="varrow d-flex align-items-center"><div class="d-flex justify-content-center ms-1" style="width:16px">${g=='port'?I(g,8,15):I(g,17,9)}</div><div class="flex-grow-1 ps-1">${T(n,w)}</div><div class="pe-3 me-1">${I('goto',13,13)}</div></div>`).join('');
bar('reuse',536,[[1790,44,field('2')],[1843,18,'<svg width="18" height="18"><path d="M1 1h16v16H1z" fill="#fff" stroke="#333" stroke-width="2"/><path d="M4 7l4 6 6-9" fill="none" stroke="#000" stroke-width="2.500"/></svg>'],[1869,50,T('Reuse',50)]]);

// console
const cb=(l,w,t)=>[l,w,combo(t)];
bar('cf',41,[[44,46,T('<u>T</u>ype:',46)],cb(100,72,I('fl2',26,22)),[183,74,T('<u>S</u>everity:',74)],cb(266,72,I('fl2',26,22)),[349,50,T('<u>C</u>ode:',50)],[409,400,'<div class="boxy padded sunk">'+T('All',21)+'</div>']]);
bar('s3',47,[[47,24,sq('tlg')],[1875,23,sq('trg')]]);
const tb=[['Log',48,31,41,112],['History',114,57,107,205],['Search Files',207,105,198,345],['Search Identifiers',348,145,338,525],['Open...',529,58,519,615]];
$('tabs').innerHTML='<svg width="620" height="26">'+tb.map(([n,x,w,a,b],i)=>`<path d="M${a-41} 0l6 16q2 5 6 5h${b-a-26}q5 0 7-5l7-16" fill="${i?'#c0c0c0':'#fff'}" stroke="#111" stroke-width="1.500"/><text x="${x-41}" y="18" font-size="18" textLength="${w}" fill="#111">${n}</text>`).join('')+'</svg>';
bar('cmd',41,[[41,120,'<div class="raised prompt">'+T('dve&gt;',42)+'</div>'],[162,1760,'<div class="boxy sunk" style="height:33px"></div>']]);
const icons=['lst','gate','pth','wv','clk','chip'];
const sbtn=(n,ck)=>`<div class="raised btnsq position-relative d-flex align-items-center justify-content-center full ${/gate|pth|chip/.test(n)?'blueish':''}">${I(n,23,23)}${ck?'<svg class="position-absolute top-0 end-0" width="15" height="15"><path d="M0 0h14v14H0z" fill="#c8c8e8" stroke="#447"/><path d="M3 6l3 5 5-8" stroke="#000" stroke-width="2" fill="none"/></svg>':''}</div>`;
bar('st1',12,[[1401,27,`<div class="raised btnsq d-flex justify-content-center pt-1">${I('bub',22,23)}</div>`],[1448,107,T('full_adder_tb',107,'mt-1')],[1642,31,T('N/A',31,'mt-1')],[1698,31,T('N/A',31,'mt-1')],...icons.map((n,i)=>[1742+27*i,27,sbtn(n,!/wv|clk/.test(n))])]);
bar('st2',534,[[1382,28,`<div class="raised btnsq d-flex justify-content-center pt-1">${I('bub',23,24)}</div>`],[1415,20,'<div class="cell"></div>'],[1439,115,'<div class="cell val">'+T('N/A',31)+'</div>'],[1557,54,'<div class="cell val">'+T('N/A',31)+'</div>'],...icons.map((n,i)=>[1616+27*i,27,sbtn(n)]),[1787,18,'<svg width="18" height="34"><path d="M0 34L18 14M6 34L18 21M12 34l6-6" stroke="#eee" stroke-width="2"/><path d="M2 34L18 16M8 34L18 23" stroke="#777"/></svg>']]);

// wave window, left
bar('f3',534,[[534,234,combo(STAR)],[773,60,combo(I('fl2',26,22))],[837,61,combo(I('sig',25,23))]]);
bar('c3',536,[[536,180,ch(T('Name',47),6)],[717,181,ch(T('Value',48),7)]]);
$('tree3').innerHTML='<path d="M15.500 2v240M23 20.500h8M15.500 242.500h14" stroke="#444" stroke-dasharray="1.500 1.500"/><path d="M9.500 14.500h12v12h-12z" fill="#fff" stroke="#888"/><path d="M12 20.500h7" stroke="#000" stroke-width="1.500"/>';
const tee=(last)=>`<svg width="14" height="37.600"><path d="M.5 0v${last?20:38}M1 19.500h13" stroke="#444" stroke-dasharray="1.500 1.500"/></svg>`;
$('sigs').innerHTML=`<div class="grp"><div class="grpname">${T('<b>Group1</b>',60)}</div></div>`+
 [['a',10,'port'],['b',9,'port'],['ci',14,'port'],['s',8,'pls'],['cout',36,'pls']].map(([n,w,g],i)=>`<div class="sgrow d-flex align-items-center"><div style="width:14px"></div>${tee(i==4)}<div class="d-flex justify-content-center ms-1" style="width:18px">${g=='port'?I(g,9,16):I(g,18,9)}</div><div class="flex-grow-1 ps-1">${T(n,w)}</div><div class="pe-1">${T('St0',26)}</div></div>`).join('')+`<div class="sgrow d-flex align-items-center">${T('New Group',93,'ms-1')}</div>`;
bar('s4',534,[[534,23,sq('tlg')],[690,23,sq('trg')],[714,24,sq('tlg')],[872,24,sq('trg')]]);
bar('s5',911,[[911,25,sq('tlg')],[1754,24,sq('trg')],[1778,25,'<div class="face d-flex align-items-center justify-content-center" style="height:24px">'+I('link',20,20)+'</div>']]);

// wave window, cursor strip and signal traces
$('cursorbar').innerHTML='<rect x="0" y="3" width="892" height="53"/><path d="M2.500 5v51" stroke="#e000e0" stroke-width="2"/><path d="M2 21a5 5 0 010 10z" fill="#f0e" stroke="#fff"/><g fill="#f0e" font-size="18"><text x="9" y="21" font-weight="bold" textLength="37" lengthAdjust="spacingAndGlyphs">C1:0</text><text x="9" y="46" fill="#d010d0" textLength="34" lengthAdjust="spacingAndGlyphs">REF</text></g>';
let o='<rect width="867" height="432"/><rect width="867" height="30" fill="#a09fa4"/><rect y="396" width="867" height="36" fill="#a09fa4"/><rect y="396" width="24" height="36" fill="#606060"/><rect x="842" y="396" width="25" height="36" fill="#606060"/>';
for(let i=1;i<39;i++){const x=2.5+22.5*i,t=i%10==0?4:i%5==0?15:22;o+=`<path d="M${x} ${t}V30" stroke="#111" stroke-width="1.500"/>`}
[0,50,100,150].forEach(n=>o+=`<text x="${n*4.5+3.5}" y="16" font-size="18" textLength="${(''+n).length*10}">${n}</text>`);
for(let i=1;i<=40;i++){const x=25+20.43*i,t=i%10==0?404:i%5==0?416:423;if(x<845)o+=`<path d="M${x} ${t}V432" stroke="#111" stroke-width="1.500"/>`}
[0,20,40,60,80].forEach(n=>o+=`<text x="${n*10.215+26.5}" y="412" font-size="18" textLength="${(''+n).length*10}">${n}</text>`);
[[0,40],[0,20,40,60],[0,10,20,30,40,50,60,70],[0,10,30,40,50,70],[0,30,40,50]].forEach((e,r)=>{const hi=72.5+r*37.5,lo=hi+28.5;
 o+=`<rect x="362.500" y="${hi-1}" width="505" height="30.500" fill="#808080"/>`;
 e.forEach((t,i)=>{const x=2.5+t*4.5,x2=2.5+(e[i+1]??80)*4.5,up=i%2,y=up?hi:lo,c=up?'#1fb81f':'#22a8ae';
  if(i)o+=`<path d="M${x} ${hi}V${lo}" stroke="${up?'#1fc81f':'#22b8be'}" stroke-width="1.500"/>`;
  o+=`<path d="M${x} ${y}H${x2}" stroke="${c}" stroke-width="2"/>`})});
o+='<path d="M2.500 0v396" stroke="#d010d0" stroke-width="1.600"/><path d="M25 396v36" stroke="#e000e0" stroke-width="1.500"/>';
$('canvas').innerHTML=o;
bar('wt',534,[[535,131,'<div class="wtab raised d-flex align-items-center ps-2">'+I('wv',21,20,'full')+'<span class="ps-2 ms-1">'+T('Wave.1',60)+'</span><svg class="ms-2" width="13" height="13"><path d="M1 2l9 9M10 2l-9 9" stroke="#444" stroke-width="1.800"/></svg></div>']]);

// taskbar
const un=x=>`<div class="under d-flex align-items-center justify-content-center">${x}</div>`;
bar('task',0,[
[24,25,'<svg width="25" height="25" fill="#fff"><path d="M0 4l10-2v10H0zM11.500 2L25 0v12H11.500zM0 13.500h10v10L0 22zM11.500 13.500H25V25l-13.500-2z"/></svg>'],
[73,431,`<div id="find" class="d-flex align-items-center justify-content-between"><div class="d-flex align-items-center ps-3"><svg width="25" height="25" fill="none" stroke="#111" stroke-width="1.800"><circle cx="16" cy="9" r="7.500"/><path d="M10.500 14.500L1 24"/></svg><span class="ms-3 mt-1 fit" data-w="198">Type here to search</span></div><svg class="me-1" width="109" height="48"><rect width="108" height="48" rx="24" fill="#242122"/><path d="M45 8h11q4 1 5 8h-6q-4 0-6 7l-2 9h-7q-5 0-3-8l3-11q1-5 5-5z" fill="url(#gcopA)"/><path d="M60 40H49q-4-1-5-7h6q4 0 6-7l2-9h7q5 0 3 8l-3 11q-1 4-5 4z" fill="url(#gcopB)"/></svg></div>`],
[528,26,'<svg width="26" height="26" fill="none" stroke="#fff" stroke-width="1.500"><path d="M1 2v3h15V2M1 8h15v10H1zM1 24v-3h15v3M22 1v6M22 13v11"/><path d="M20 10h4" stroke-width="3"/></svg>'],
[586,61,un('<svg width="34" height="30"><path d="M1 3h12l3 3h16v22H1z" fill="#f5b924"/><path d="M1 8h32v20H1z" fill="#ffd768"/><path d="M7 28V16h20v12h-6v-6h-8v6z" fill="#3f95dc"/></svg>')],
[674,35,'<svg width="35" height="38"><path d="M9 8V2h17v6" fill="none" stroke="#2ba7e0" stroke-width="2.500"/><rect y="7" width="35" height="30" rx="4" fill="#f3f3f3"/><path d="M10 14h7v7h-7z" fill="#e8502a"/><path d="M19 14h7v7h-7z" fill="#7db800"/><path d="M10 23h7v7h-7z" fill="#0aa1e8"/><path d="M19 23h7v7h-7z" fill="#fbb400"/></svg>'],
[748,37,'<svg width="37" height="34"><path d="M0 12L18 0l19 12v22H0z" fill="#0f5fae"/><path d="M3 11h31v15H3z" fill="#fff"/><path d="M0 12l18 11L37 12v22H0z" fill="#29a7ea"/><path d="M18 23L37 34H0z" fill="#46c3f4"/></svg>'],
[811,61,un('<svg width="36" height="36"><circle cx="18" cy="18" r="17.500" fill="#1476c8"/><path d="M2 12Q8 0 19 .5 34 1 35.500 16 34 24 24 23q-4-1-2-5 0-7-8-7-8 0-13 7z" fill="url(#gedge)"/><path d="M22 18q-2 4 2 5 7 1 10-3-4 13-16 13Q8 28 12 18q3-5 10-1z" fill="#0e4f96"/><path d="M22 18q-1 4 3 5 6 1 10-3l2 6-6 2q-10 0-12-5 0-4 3-5z" fill="#23383f"/></svg>')],
[886,61,un('<svg width="36" height="36"><circle cx="18" cy="18" r="18" fill="#e33b2e"/><path d="M2.500 9L11 22l7 14A18 18 0 012.500 9z" fill="#2fa24c"/><path d="M18 10h16.200A18 18 0 0118 36l8-14z" fill="#fcc934"/><circle cx="18" cy="18" r="8.500" fill="#fff"/><circle cx="18" cy="18" r="6.800" fill="#2f72e6"/></svg>')],
[961,61,un('<svg width="38" height="36"><path d="M1 1h35v27H1z" fill="#332d31" stroke="#aaa" stroke-width="1.500"/><path d="M5 5l4 3-4 3M10 12h5" stroke="#fff" stroke-width="1.500" fill="none"/><path d="M11 21l9-8 5 6-8 8z" fill="#4a80e8"/><path d="M13 25l8-8 6 9-6 4z" fill="#e8443a"/><path d="M22 14l7-4 4 9-6 6z" fill="#4a80e8"/><path d="M25 36l-4-8 8-8 7 6z" fill="#65d33a"/></svg>')],
[1036,61,un('<svg width="38" height="36"><path d="M17 6Q35 4 33 20 30 34 14 34q-7 0-5-6Q0 30 1 21 3 9 17 6z" fill="#c8e3f2"/><circle cx="14" cy="13" r="3" fill="#48a845"/><circle cx="7" cy="18" r="3" fill="#e23a2e"/><circle cx="7" cy="25" r="2.500" fill="#f0a020"/><circle cx="20" cy="10" r="2.500" fill="#f2b92a"/><path d="M35 0l-3 9-8 26-2-1 7-26z" fill="#d98a3c"/></svg>')],
[1106,67,'<div class="under d-flex align-items-center justify-content-center" style="background:#4d5c68">'+I('dve',40,37,'ms-1')+'</div>'],[1174,5,'<div class="under" style="background:#4d5c68"></div>'],
[1526,36,'<svg width="36" height="25" fill="none" stroke="#fff" stroke-width="2.500"><path d="M2 1h28v22H2zM30 6h4v17H6"/><path d="M6 6.500h20M6 11h8v8H6zM18 12h8M18 15.500h8M18 19h8" stroke-width="2"/></svg>'],
[1601,18,'<svg width="18" height="10" fill="none" stroke="#fff" stroke-width="1.500"><path d="M1 9l8-8 8 8"/></svg>'],
[1634,24,'<svg width="24" height="18" fill="none" stroke="#fff" stroke-width="1.500"><path d="M6 5h15v10H6zM23 8v4M1 3h7v4q-3 4-6 0zM3 0v3M6 0v3M4 9v6h3"/><path d="M9 7h10v6H9z" fill="#fff"/></svg>'],
[1674,20,'<svg width="20" height="20" fill="none" stroke="#ddd" stroke-width="1.400"><path d="M1 19Q2 3 18 1M6 19Q7 8 18 6M10 19q1-7 8-8"/><circle cx="16" cy="17" r="2" fill="#fff"/></svg>'],
[1706,22,'<svg width="22" height="18" fill="none" stroke="#fff" stroke-width="1.400"><path d="M1 6h4l5-5v16l-5-5H1zM14 5l7 8M21 5l-7 8"/></svg>'],
[1744,88,`<div class="text-center clock">${T('4:11 PM',65)}<br>${T('2/12/2024',84)}</div>`],
[1858,25,'<svg width="25" height="26" fill="none" stroke="#fff" stroke-width="1.500"><path d="M1 1h23v18h-7l-4 5-4-5H1z"/></svg>'],
[1913,1,'<div style="height:60px;background:#71808f"></div>']]);

// Spread each label over its intended width.
document.querySelectorAll('[data-w]').forEach(e=>{const n=e.textContent.length,w=e.getBoundingClientRect().width;e.style.letterSpacing=((e.dataset.w-w)/n).toFixed(3)+'px'});
</script>
</body>
</html>
